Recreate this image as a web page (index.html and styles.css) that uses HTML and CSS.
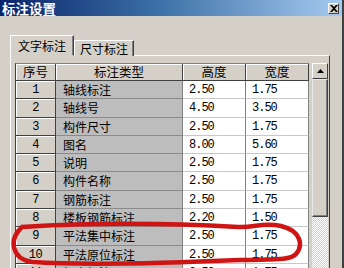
FILE: index.html
```html
<!DOCTYPE html>
<html lang="zh">
<head>
<meta charset="utf-8">
<link rel="stylesheet" href="styles.css">
</head>
<body>
<div class="window">
  <div class="titlebar">
    <span class="title">标注设置</span>
    <span class="close">
      <svg width="8" height="7" viewBox="0 0 8 7"><path d="M0 0h2l2 2 2-2h2L5 3.5 8 7H6L4 5 2 7H0l3-3.5z" fill="#000"/></svg>
    </span>
  </div>
  <div class="content">
    <div class="tabs">
      <div class="tab active">文字标注</div>
      <div class="tab">尺寸标注</div>
    </div>
    <div class="panel">
      <div class="gridwrap">
        <div class="table">
          <div class="hd">序号</div><div class="hd">标注类型</div><div class="hd">高度</div><div class="hd">宽度</div>
          <div class="rh">1</div><div class="ro">轴线标注</div><div class="num">2.50</div><div class="num">1.75</div>
          <div class="rh">2</div><div class="ro">轴线号</div><div class="num">4.50</div><div class="num">3.50</div>
          <div class="rh">3</div><div class="ro">构件尺寸</div><div class="num">2.50</div><div class="num">1.75</div>
          <div class="rh">4</div><div class="ro">图名</div><div class="num">8.00</div><div class="num">5.60</div>
          <div class="rh">5</div><div class="ro">说明</div><div class="num">2.50</div><div class="num">1.75</div>
          <div class="rh">6</div><div class="ro">构件名称</div><div class="num">2.50</div><div class="num">1.75</div>
          <div class="rh">7</div><div class="ro">钢筋标注</div><div class="num">2.50</div><div class="num">1.75</div>
          <div class="rh">8</div><div class="ro">楼板钢筋标注</div><div class="num">2.20</div><div class="num">1.50</div>
          <div class="rh">9</div><div class="ro">平法集中标注</div><div class="num">2.50</div><div class="num">1.75</div>
          <div class="rh">10</div><div class="ro">平法原位标注</div><div class="num">2.50</div><div class="num">1.75</div>
          <div class="rh">11</div><div class="ro">标高标注</div><div class="num">2.50</div><div class="num">1.75</div>
        </div>
        <div class="vscroll">
          <div class="sbtn"><svg width="7" height="4" viewBox="0 0 7 4"><path d="M3.5 0L7 4H0z" fill="#000"/></svg></div>
          <div class="thumb"></div>
          <div class="track"></div>
        </div>
      </div>
    </div>
  </div>
  <svg class="mark" width="344" height="268" viewBox="0 0 344 268">
    <path d="M22 227 C70 224 150 222 238 227 C255 228 262 222 281 226 C302 231 303 246 296 254 C290 261 270 259 240 260 C170 263 80 265 32 262 C12 259 8 240 22 227" fill="none" stroke="#cf1414" stroke-width="4.5" stroke-linecap="round"/>
  </svg>
</div>
</body>
</html>
```
FILE: styles.css
```css
html, body {
  margin: 0;
  padding: 0;
}
body {
  width: 344px;
  height: 268px;
  overflow: hidden;
  background: #d4d0c8;
  font-family: "Noto Sans CJK SC", "Noto Sans", sans-serif;
  font-size: 12px;
  color: #000;
}
.window {
  position: relative;
  width: 344px;
  height: 268px;
  overflow: hidden;
  box-sizing: border-box;
  border-right: 2px solid #404040;
  background: #d4d0c8;
}
.titlebar {
  height: 16px;
  display: flex;
  align-items: center;
  justify-content: space-between;
  padding: 0 3px 0 2px;
  background: linear-gradient(to right, #0a246a 0%, #3a6ea5 45%, #a6caf0 100%);
}
.title {
  color: #fff;
  font-weight: bold;
  font-size: 13.5px;
  line-height: 16px;
}
.close {
  width: 11px;
  height: 11px;
  box-sizing: border-box;
  background: #d4d0c8;
  border-top: 1px solid #fff;
  border-left: 1px solid #fff;
  border-right: 1px solid #404040;
  border-bottom: 1px solid #404040;
  display: flex;
  align-items: center;
  justify-content: center;
}
.content {
  padding: 19px 12px 0 10px;
}
.tabs {
  display: flex;
  align-items: flex-end;
  height: 21px;
  margin-bottom: -1px;
  position: relative;
  z-index: 1;
}
.tab {
  box-sizing: border-box;
  height: 16px;
  padding: 0 5px;
  text-align: center;
  line-height: 15px;
  white-space: nowrap;
  border-top: 1px solid #fff;
  border-left: 1px solid #fff;
  border-right: 1px solid #404040;
  background: #d4d0c8;
  box-shadow: inset -1px 0 0 #808080;
}
.tab.active {
  height: 21px;
  padding: 0 7px;
  line-height: 19px;
  border-bottom: 1px solid #d4d0c8;
}
.panel {
  border-top: 1px solid #fff;
  border-left: 1px solid #fff;
  border-right: 1px solid #404040;
  padding: 7px 0 0 4px;
  height: 220px;
}
.gridwrap {
  display: flex;
  align-items: flex-start;
}
.table {
  display: grid;
  grid-template-columns: 40px 127px 63px 63px;
  grid-auto-rows: 18.3px;
  grid-template-rows: 17px;
  border-left: 1px solid #404040;
  border-top: 1px solid #808080;
  background: #fff;
}
.table > div {
  box-sizing: border-box;
  border-right: 1px solid #808080;
  border-bottom: 1px solid #9a9a9a;
  white-space: nowrap;
  line-height: 18px;
}
.hd {
  background: #d4d0c8;
  text-align: center;
  border-right-color: #404040 !important;
  border-bottom-color: #404040 !important;
  box-shadow: inset 1px 1px 0 #fff;
  font-size: 12.5px;
  line-height: 16px !important;
}
.rh {
  background: #d4d0c8;
  text-align: center;
  font-family: "Liberation Mono", monospace;
  letter-spacing: -0.5px;
  border-right-color: #404040 !important;
  border-bottom-color: #404040 !important;
  box-shadow: inset 1px 1px 0 #fff;
}
.ro {
  background: #bdbdbd;
  padding-left: 7px;
  font-size: 12px;
  border-bottom-color: #8a8a8a !important;
}
.num {
  font-family: "Liberation Mono", monospace;
  letter-spacing: -1px;
  padding-left: 6px;
  border-bottom-color: #c8c8c8 !important;
}
.vscroll {
  width: 16px;
  margin-left: 3px;
  display: flex;
  flex-direction: column;
  height: 206px;
}
.sbtn {
  height: 16px;
  box-sizing: border-box;
  background: #d4d0c8;
  border-top: 1px solid #fff;
  border-left: 1px solid #fff;
  border-right: 1px solid #404040;
  border-bottom: 1px solid #404040;
  display: flex;
  align-items: center;
  justify-content: center;
}
.thumb {
  height: 138px;
  box-sizing: border-box;
  background: #d4d0c8;
  border-top: 1px solid #e8e8e8;
  border-left: 1px solid #e8e8e8;
  border-right: 1px solid #404040;
  border-bottom: 1px solid #404040;
  box-shadow: inset -1px -1px 0 #808080;
}
.track {
  flex: 1;
  background: repeating-conic-gradient(#fff 0 25%, #d4d0c8 0 50%) 0 0 / 2px 2px;
}
.mark {
  position: absolute;
  left: 0;
  top: 0;
  pointer-events: none;
}
```
